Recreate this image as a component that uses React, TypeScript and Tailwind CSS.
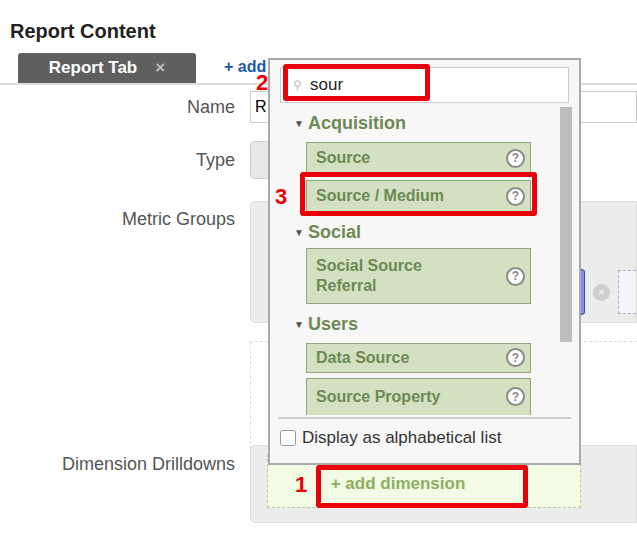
import React from "react";

const Help = () => (
  <span className="flex h-[19px] w-[19px] items-center justify-center rounded-full border-2 border-[#8a8a8a] bg-white text-[12px] font-bold leading-none text-[#8a8a8a]">?</span>
);

const Item = ({ label, h = 32, cut = false }: { label: string; h?: number; cut?: boolean }) => (
  <div
    className={`flex items-center justify-between border border-[#8fa77a] bg-[#d3e0c2] pl-[9px] pr-[5px] ${cut ? "border-b-0" : ""}`}
    style={{ height: h }}
  >
    <span className="w-[140px] text-[16px] font-bold leading-[20px] text-[#6c8a53]">{label}</span>
    <Help />
  </div>
);

const Group = ({ label }: { label: string }) => (
  <div className="flex h-[32px] items-center gap-[4px] pl-[24px] text-[18px] font-bold text-[#6c8a53]">
    <span className="text-[10px] text-[#555]">▼</span>
    {label}
  </div>
);

export default function App() {
  return (
    <div className="relative h-[545px] w-[637px] overflow-hidden bg-white" style={{ fontFamily: "'Liberation Sans', Arial, sans-serif" }}>
      <div className="pl-[10px] pt-[16px] text-[20px] font-bold text-[#222]">Report Content</div>
      <div className="mt-[7px] flex items-end border-b-2 border-[#ddd] pl-[18px]">
        <div className="flex h-[30px] w-[178px] items-center justify-center gap-[18px] rounded-t-[3px] bg-[#5f5f5f] text-[17px] font-bold text-white">
          Report Tab <span className="text-[#bbb]">×</span>
        </div>
        <div className="ml-[28px] pb-[4px] text-[16px] font-bold text-[#1a5aa8]">+ add</div>
      </div>
      <div className="mt-[6px] flex items-center">
        <div className="w-[235px] text-right text-[18px] text-[#555]">Name</div>
        <div className="ml-[15px] flex h-[32px] flex-1 items-center border border-[#ccc] pl-[4px] text-[16px]">R</div>
      </div>
      <div className="mt-[18px] flex items-center">
        <div className="w-[235px] text-right text-[18px] text-[#555]">Type</div>
        <div className="ml-[15px] h-[38px] w-[60px] rounded-l-[4px] border border-[#ccc] bg-[#e8e8e8]" />
      </div>
      <div className="mt-[22px] flex items-start">
        <div className="w-[235px] pt-[5px] text-right text-[18px] text-[#555]">Metric Groups</div>
        <div className="ml-[15px] flex h-[122px] flex-1 items-center justify-end gap-[8px] rounded-l-[5px] border border-[#ddd] bg-[#ececec] pt-[60px]">
          <div className="h-[46px] w-[14px] rounded-r-[3px] border border-[#3b4db0] bg-[#7e8ff5]" />
          <div className="flex h-[17px] w-[17px] items-center justify-center rounded-full bg-[#cfcfcf] text-[11px] text-white">×</div>
          <div className="h-[44px] w-[18px] border border-dashed border-r-0 border-[#aab] bg-[#f3f3fb]" />
        </div>
      </div>
      <div className="ml-[250px] mt-[18px] h-[118px] border border-dashed border-r-0 border-[#ddd]" />
      <div className="mt-[-14px] flex items-start">
        <div className="w-[235px] pt-[6px] text-right text-[18px] text-[#555]">Dimension Drilldowns</div>
        <div className="ml-[15px] h-[78px] flex-1 rounded-l-[5px] border border-[#ddd] bg-[#ececec] pl-[16px] pt-[8px]">
          <div className="flex h-[54px] w-[314px] items-center border border-dashed border-[#b8c89a] bg-[#f3fbe4] pl-[50px] pt-[6px]">
            <div className="flex h-[28px] w-[160px] items-center justify-center text-[17px] font-bold text-[#8cae63]">+ add dimension</div>
          </div>
        </div>
      </div>

      {/* Popup */}
      <div className="absolute left-[268px] top-[58px] h-[407px] w-[313px] border-2 border-[#a9a9a9] bg-[#f7f7f7]">
        <div className="mx-[10px] mt-[7px] flex h-[36px] items-center gap-[8px] border border-[#ccc] bg-white pl-[12px] text-[17px] text-[#222]">
          <span className="text-[12px] text-[#bbb]">⚲</span>sour
        </div>
        <div className="mt-[4px] flex">
          <div className="w-[270px]">
            <Group label="Acquisition" />
            <div className="ml-[36px] mt-[3px] flex w-[225px] flex-col gap-[6px]">
              <Item label="Source" />
              <Item label="Source / Medium" />
            </div>
            <div className="mt-[4px]"><Group label="Social" /></div>
            <div className="ml-[36px] w-[225px]"><Item label="Social Source Referral" h={56} /></div>
            <div className="mt-[4px]"><Group label="Users" /></div>
            <div className="ml-[36px] mt-[3px] flex h-[72px] w-[225px] flex-col gap-[5px] overflow-hidden">
              <Item label="Data Source" />
              <Item label="Source Property" h={40} cut />
            </div>
          </div>
          <div className="ml-[20px] h-[235px] w-[12px] bg-[#bdbdbd]" />
        </div>
        <div className="mx-[8px] mt-[2px] border-t-2 border-[#ccc]" />
        <div className="mt-[6px] flex items-center gap-[6px] pl-[10px] text-[17px] text-[#333]">
          <span className="h-[16px] w-[16px] rounded-[3px] border border-[#999] bg-white" />
          Display as alphabetical list
        </div>
      </div>

      {/* Red annotations */}
      <div className="absolute left-[283px] top-[64px] h-[37px] w-[147px] rounded-[3px] border-[5px] border-[#e8000b]" />
      <div className="absolute left-[256px] top-[72px] text-[22px] font-bold leading-none text-[#e8000b]">2</div>
      <div className="absolute left-[300px] top-[172px] h-[44px] w-[237px] rounded-[3px] border-[5px] border-[#e8000b]" />
      <div className="absolute left-[275px] top-[186px] text-[22px] font-bold leading-none text-[#e8000b]">3</div>
      <div className="absolute left-[316px] top-[465px] h-[43px] w-[212px] rounded-[3px] border-[5px] border-[#e8000b]" />
      <div className="absolute left-[295px] top-[474px] text-[22px] font-bold leading-none text-[#e8000b]">1</div>
    </div>
  );
}
